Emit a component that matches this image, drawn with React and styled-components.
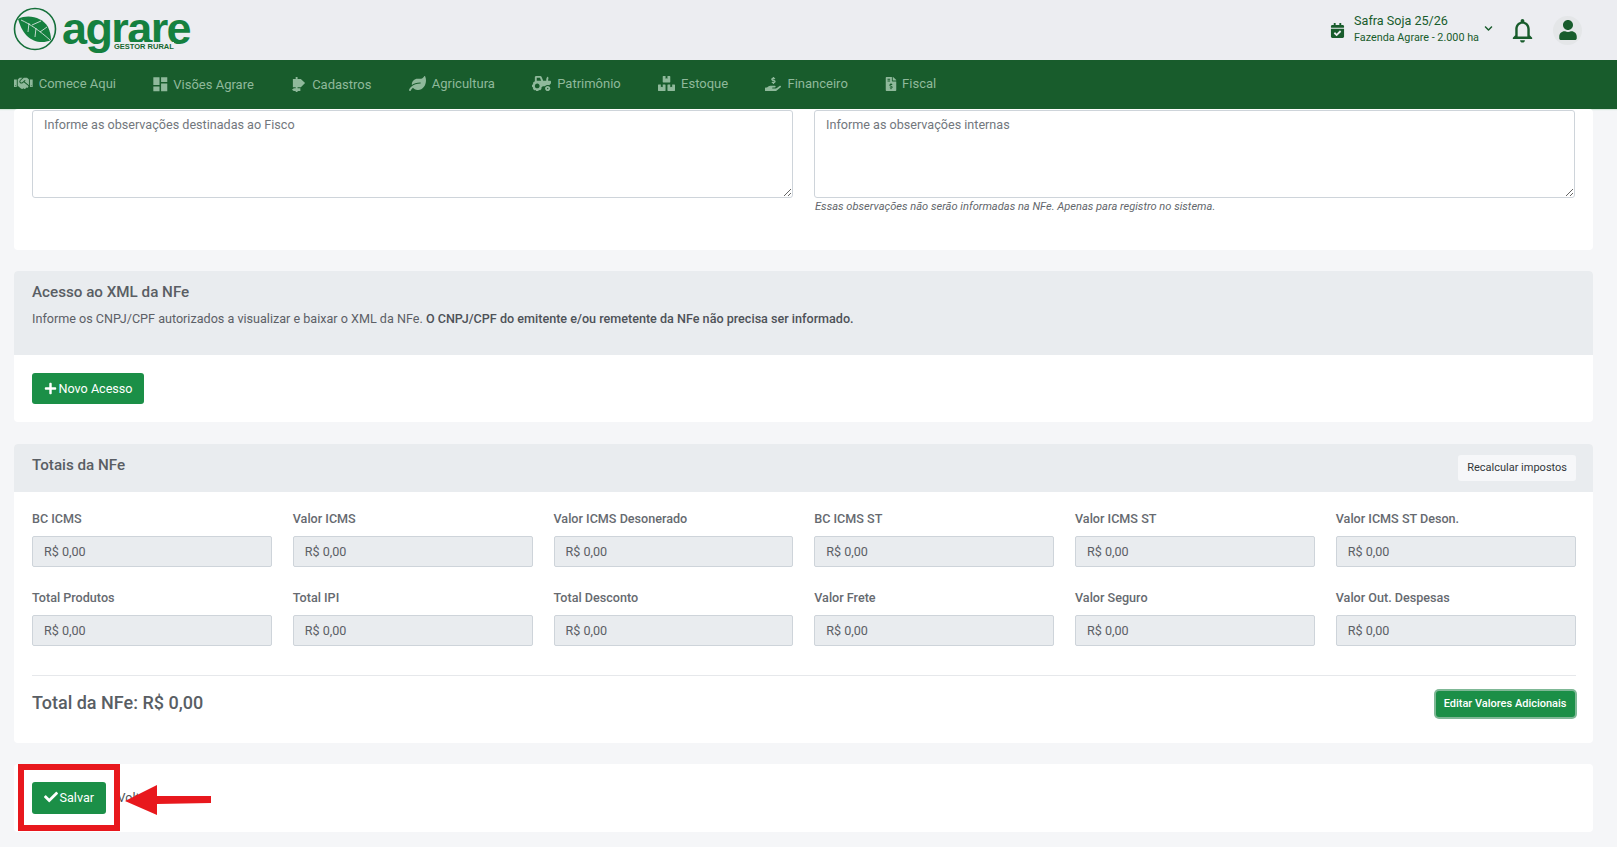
import React from 'react'
import styled, { createGlobalStyle } from 'styled-components'
import {
  FaHandshake, FaLeaf, FaTractor, FaBoxes, FaHandHoldingUsd,
  FaFileInvoiceDollar, FaChevronDown, FaUser, FaCheck, FaPlus, FaCalendarCheck
} from 'react-icons/fa'
import { MdDashboard, MdNotificationsNone } from 'react-icons/md'

const GlobalStyle = createGlobalStyle`
  html, body { margin: 0; padding: 0; height: 100%; overflow: hidden; }
  body { background: #f5f6f8; font-family: Roboto, "Liberation Sans", sans-serif; color: #5c6066; }
  * { box-sizing: border-box; }
`

const Page = styled.div`
  display: flex;
  flex-direction: column;
  height: 847px;
  overflow: hidden;
`

const Header = styled.header`
  display: flex;
  align-items: center;
  justify-content: space-between;
  height: 60px;
  flex-shrink: 0;
  background: #ecedf1;
  padding: 0 35px 0 13px;
`

const Logo = styled.div`
  display: flex;
  align-items: flex-start;
  position: relative;
  height: 44px;
  margin-top: -3px;
`

const LogoWord = styled.span`
  font-family: "Liberation Sans", Arial, sans-serif;
  font-weight: 700;
  font-size: 45px;
  line-height: 26px;
  letter-spacing: -1.6px;
  color: #15803f;
  margin: 9.5px 0 0 5px;
`

const LogoTag = styled.span`
  position: absolute;
  left: 100px;
  top: 35.5px;
  font-family: "Liberation Sans", Arial, sans-serif;
  font-weight: 700;
  font-size: 7.5px;
  line-height: 10px;
  color: #16672f;
  background: #ecedf1;
  padding: 0 0 0 1px;
`

const HeaderRight = styled.div`
  display: flex;
  align-items: center;
  color: #185c2c;
`

const Farm = styled.div`
  display: flex;
  flex-direction: column;
  margin: -3px 5px 0 9px;
`

const FarmName = styled.span`
  font-size: 12.6px;
  line-height: 17px;
`

const FarmSub = styled.span`
  font-size: 10.8px;
  line-height: 17px;
`

const Chevron = styled(FaChevronDown)`
  margin: -3px 15px 0 0;
`

const Avatar = styled.div`
  display: flex;
  align-items: center;
  justify-content: center;
  width: 29px;
  height: 29px;
  border-radius: 50%;
  background: #e4e6e8;
  margin-left: 16px;
`

const Nav = styled.nav`
  display: flex;
  align-items: center;
  gap: 37.3px;
  height: 49px;
  flex-shrink: 0;
  padding: 0 0 2px 14px;
  background: #185c2c;
  color: #8fb99b;
  box-shadow: 0 1px 1px #d5e8dc;
`

const NavItem = styled.a`
  display: flex;
  align-items: center;
  gap: 6px;
  font-size: 13px;
  white-space: nowrap;
  margin-top: ${p => (p.$drop ? 2 : 0)}px;
`

const DashIcon = styled(MdDashboard)`
  margin: 0 -2.3px;
`

const FiscalIcon = styled(FaFileInvoiceDollar)`
  margin: 0 -1.5px;
`

const Main = styled.main`
  display: flex;
  flex-direction: column;
  gap: 21.5px;
  padding: 0 24px 0 14px;
`

const Card = styled.section`
  position: relative;
  background: #fff;
  border-radius: 4px;
  overflow: ${p => (p.$open ? 'visible' : 'hidden')};
`

const NotesBody = styled.div`
  display: grid;
  grid-template-columns: 1fr 1fr;
  gap: 21px;
  height: 140.5px;
  padding: 1px 18px 0;
`

const Notes = styled.textarea`
  display: block;
  width: 100%;
  height: 88px;
  padding: 6px 11px;
  border: 1px solid #ced4da;
  border-radius: 3px;
  background: #fff;
  font: 12.6px Roboto, sans-serif;
  outline: none;
  &::placeholder { color: #72777d; opacity: 1; }
`

const Hint = styled.small`
  display: block;
  margin-top: 2px;
  padding-left: 1px;
  font-size: 11.1px;
  font-style: italic;
  line-height: 14px;
  color: #63676c;
`

const CardHead = styled.div`
  display: flex;
  justify-content: space-between;
  align-items: flex-start;
  background: #e9ecef;
  height: 48px;
  padding: 11px 17px 11px 18px;
`

const CardIntro = styled.div`
  background: #e9ecef;
  height: 84px;
  padding: 11px 18px;
`

const CardTitle = styled.h3`
  margin: 0 0 7px;
  font-size: 15.2px;
  line-height: 20px;
  font-weight: 500;
  color: #595e64;
`

const CardText = styled.p`
  margin: 0;
  font-size: 12.6px;
  line-height: 20px;
  b { font-weight: 500; color: #4e5258; }
`

const CardBody = styled.div`
  padding: ${p => p.$pad};
`

const Button = styled.button`
  display: inline-flex;
  align-items: center;
  justify-content: center;
  gap: 2px;
  height: ${p => p.$height || 31}px;
  padding: 0 11.5px 1px;
  border: 0;
  border-radius: 3px;
  background: #1b8f47;
  color: #fff;
  font: 12.6px Roboto, sans-serif;
`

const GhostButton = styled.button`
  height: 26px;
  padding: 0 9px 1px;
  border: 0;
  border-radius: 3px;
  background: #f6f7f9;
  color: #33373b;
  font: 11px Roboto, sans-serif;
`

const RingButton = styled(Button)`
  height: 26px;
  margin-right: 1px;
  padding: 0 8px 1px;
  font-size: 11px;
  font-weight: 500;
  box-shadow: 0 0 0 2px #7fb896;
`

const LinkButton = styled.button`
  height: 32px;
  padding: 0 12px;
  border: 0;
  background: transparent;
  color: #4f5358;
  font: 12.6px Roboto, sans-serif;
`

const FieldGrid = styled.div`
  display: grid;
  grid-template-columns: repeat(6, 1fr);
  column-gap: 21px;
  row-gap: 21px;
`

const Field = styled.label`
  display: block;
`

const FieldLabel = styled.span`
  display: block;
  margin-bottom: 7px;
  font-size: 12.6px;
  line-height: 20px;
  font-weight: 500;
  color: #666a70;
`

const ReadOnly = styled.input`
  display: block;
  width: 100%;
  height: 31px;
  padding: 0 11px;
  border: 1px solid #ced4da;
  border-radius: 2px;
  background: #e9ecef;
  color: #5c6066;
  font: 12.6px Roboto, sans-serif;
  outline: none;
`

const TotalRow = styled.div`
  display: flex;
  align-items: center;
  justify-content: space-between;
  margin-top: 29px;
  padding-top: 15px;
  border-top: 1px solid #e6e8eb;
`

const TotalText = styled.strong`
  font-size: 18px;
  line-height: 24px;
  font-weight: 500;
  color: #595e64;
  margin-top: -1px;
`

const SaveBar = styled.div`
  display: flex;
  align-items: center;
  height: 68px;
  padding: 0 18px 1px;
`

const Highlight = styled.div`
  position: absolute;
  left: 4px;
  top: 0;
  width: 102px;
  height: 67px;
  border: 6px solid #e8181d;
`

const Arrow = styled.svg`
  position: absolute;
  left: 110px;
  top: 20px;
`

const SignIcon = ({ size }) => (
  <svg width={size} height={size} viewBox="0 0 16 16" fill="currentColor">
    <path d="M5 0h2v2h3.5L15 6.5 10.5 11H7v1h3v3H7v1H5v-1H3l-2-1.5L3 12h2v-1H2V2h3z" />
  </svg>
)

const navItems = [
  [FaHandshake, 18.7, 'Comece Aqui', false],
  [DashIcon, 18.6, 'Visões Agrare', true],
  [SignIcon, 15, 'Cadastros', true],
  [FaLeaf, 17, 'Agricultura', false],
  [FaTractor, 19, 'Patrimônio', false],
  [FaBoxes, 17, 'Estoque', false],
  [FaHandHoldingUsd, 16, 'Financeiro', false],
  [FiscalIcon, 14, 'Fiscal', false],
]

const fields = [
  'BC ICMS', 'Valor ICMS', 'Valor ICMS Desonerado', 'BC ICMS ST', 'Valor ICMS ST', 'Valor ICMS ST Deson.',
  'Total Produtos', 'Total IPI', 'Total Desconto', 'Valor Frete', 'Valor Seguro', 'Valor Out. Despesas',
]

const LeafMark = () => (
  <svg width="44" height="44" viewBox="0 0 44 44">
    <circle cx="22" cy="22" r="20.5" fill="none" stroke="#15703a" strokeWidth="1.6" />
    <path d="M5 12 C15 7 29 10 35 20 C37 24 38 29 38 33 C30 37 20 35 14 29 C9 24 7 18 5 12 Z" fill="#15803f" />
    <path d="M8 13 C17 17 27 24 37 33 M16 16 L15 25 M23 21 L22 30 M19 18 L28 14 M27 25 L34 20" fill="none" stroke="#ecedf1" strokeWidth="0.8" />
  </svg>
)

export default function App() {
  return (
    <Page>
      <GlobalStyle />
      <Header>
        <Logo>
          <LeafMark />
          <LogoWord>agrare</LogoWord>
          <LogoTag>GESTOR RURAL</LogoTag>
        </Logo>
        <HeaderRight>
          <FaCalendarCheck size={15} />
          <Farm>
            <FarmName>Safra Soja 25/26</FarmName>
            <FarmSub>Fazenda Agrare - 2.000 ha</FarmSub>
          </Farm>
          <Chevron size={9} />
          <MdNotificationsNone size={29} />
          <Avatar><FaUser size={20} /></Avatar>
        </HeaderRight>
      </Header>
      <Nav>
        {navItems.map(([Icon, size, label, drop]) => (
          <NavItem key={label} $drop={drop}><Icon size={size} />{label}</NavItem>
        ))}
      </Nav>
      <Main>
        <Card>
          <NotesBody>
            <div>
              <Notes placeholder="Informe as observações destinadas ao Fisco" />
            </div>
            <div>
              <Notes placeholder="Informe as observações internas" />
              <Hint>Essas observações não serão informadas na NFe. Apenas para registro no sistema.</Hint>
            </div>
          </NotesBody>
        </Card>
        <Card>
          <CardIntro>
            <CardTitle>Acesso ao XML da NFe</CardTitle>
            <CardText>
              Informe os CNPJ/CPF autorizados a visualizar e baixar o XML da NFe.{' '}
              <b>O CNPJ/CPF do emitente e/ou remetente da NFe não precisa ser informado.</b>
            </CardText>
          </CardIntro>
          <CardBody $pad="18px">
            <Button><FaPlus size={13} />Novo Acesso</Button>
          </CardBody>
        </Card>
        <Card>
          <CardHead>
            <CardTitle>Totais da NFe</CardTitle>
            <GhostButton>Recalcular impostos</GhostButton>
          </CardHead>
          <CardBody $pad="17px 17.5px 26px 18px">
            <FieldGrid>
              {fields.map(label => (
                <Field key={label}>
                  <FieldLabel>{label}</FieldLabel>
                  <ReadOnly readOnly value="R$ 0,00" />
                </Field>
              ))}
            </FieldGrid>
            <TotalRow>
              <TotalText>Total da NFe: R$ 0,00</TotalText>
              <RingButton>Editar Valores Adicionais</RingButton>
            </TotalRow>
          </CardBody>
        </Card>
        <Card $open>
          <SaveBar>
            <Button $height={32}><FaCheck size={14} />Salvar</Button>
            <LinkButton>Voltar</LinkButton>
          </SaveBar>
          <Highlight />
          <Arrow width="90" height="40" viewBox="0 0 90 40">
            <path d="M1 17 L33 1 L33 12 L87 12 L87 19 L33 20 L33 31 Z" fill="#e8181d" />
          </Arrow>
        </Card>
      </Main>
    </Page>
  )
}
